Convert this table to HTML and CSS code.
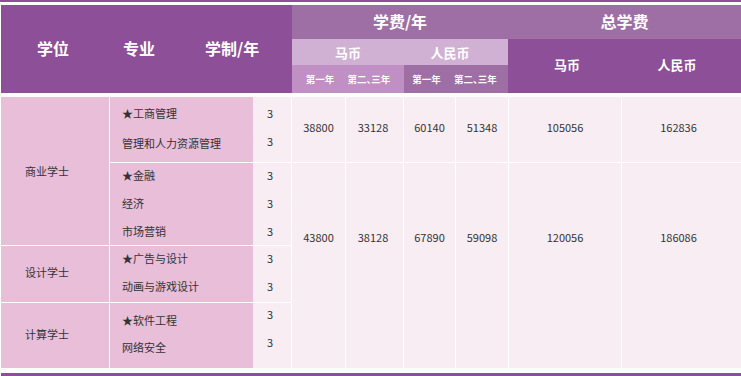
FILE: index.html
```html
<!DOCTYPE html>
<html lang="zh">
<head>
<meta charset="utf-8">
<title>学费表</title>
<link rel="stylesheet" href="styles.css">
</head>
<body>
<div class="page">
  <div class="topbar"></div>
  <div class="head">
    <div class="head-left">
      <span class="hl1">学位</span>
      <span class="hl2">专业</span>
      <span class="hl3">学制/年</span>
    </div>
    <div class="head-fee">
      <div class="h1">学费/年</div>
      <div class="h2"><span class="h2a">马币</span><span class="h2b">人民币</span></div>
      <div class="h3">
        <div class="sub sub-myr"><span>第一年</span><span>第二、三年</span></div>
        <div class="sub sub-rmb"><span>第一年</span><span>第二、三年</span></div>
      </div>
    </div>
    <div class="head-total">
      <div class="h1">总学费</div>
      <div class="h2t"><span class="t1">马币</span><span class="t2">人民币</span></div>
    </div>
  </div>

  <div class="grid">
    <div class="cell deg deg1 line-b">商业学士</div>
    <div class="cell deg deg2 line-b">设计学士</div>
    <div class="cell deg deg3">计算学士</div>

    <div class="cell maj maj1 line-b"><span>★工商管理</span><span>管理和人力资源管理</span></div>
    <div class="cell maj maj2 line-b"><span>★金融</span><span>经济</span><span>市场营销</span></div>
    <div class="cell maj maj3 line-b"><span>★广告与设计</span><span>动画与游戏设计</span></div>
    <div class="cell maj maj4"><span>★软件工程</span><span>网络安全</span></div>

    <div class="cell yrs yrs1 line-b"><span>3</span><span>3</span></div>
    <div class="cell yrs yrs2 line-b"><span>3</span><span>3</span><span>3</span></div>
    <div class="cell yrs yrs3 line-b"><span>3</span><span>3</span></div>
    <div class="cell yrs yrs4"><span>3</span><span>3</span></div>

    <div class="cell fee r1 c4 line-b">38800</div>
    <div class="cell fee r1 c5 line-b">33128</div>
    <div class="cell fee r1 c6 line-b">60140</div>
    <div class="cell fee r1 c7 line-b">51348</div>
    <div class="cell fee r1 c8 line-b">105056</div>
    <div class="cell fee r1 c9 line-b">162836</div>

    <div class="cell fee r2 c4">43800</div>
    <div class="cell fee r2 c5">38128</div>
    <div class="cell fee r2 c6">67890</div>
    <div class="cell fee r2 c7">59098</div>
    <div class="cell fee r2 c8">120056</div>
    <div class="cell fee r2 c9">186086</div>
  </div>
  <div class="bottombar"></div>
</div>
</body>
</html>
```

FILE: styles.css
```css
html, body {
  margin: 0;
  padding: 0;
  background: #ffffff;
}

.page {
  width: 741px;
  font-family: "Noto Sans CJK SC", "Noto Sans", sans-serif;
  color: #333333;
}

.topbar {
  height: 2px;
  background: #8c4f98;
}

.head {
  display: flex;
  margin-top: 3px;
  margin-left: 1px;
  height: 88px;
  color: #ffffff;
  font-weight: 700;
}

.head-left {
  width: 291px;
  background: #8c4f98;
  display: flex;
  align-items: center;
  font-size: 16px;
  padding-left: 36px;
  box-sizing: border-box;
  padding-bottom: 3px;
}

.hl1 { width: 86px; }
.hl2 { width: 82px; }

.head-fee {
  width: 216px;
  display: flex;
  flex-direction: column;
}

.h1 {
  height: 34px;
  background: #9d6fa5;
  display: flex;
  align-items: center;
  justify-content: center;
  font-size: 16px;
  padding-bottom: 2px;
  box-sizing: border-box;
}

.h2 {
  height: 26px;
  background: #d0b1d4;
  display: flex;
  align-items: center;
  font-size: 13px;
}

.h2a {
  width: 112px;
  text-align: center;
}

.h2b {
  width: 92px;
  text-align: center;
}

.h3 {
  height: 28px;
  display: flex;
}

.sub {
  display: flex;
  align-items: center;
  justify-content: center;
  gap: 13px;
  font-size: 9.5px;
  font-feature-settings: "halt";
}

.sub-myr {
  width: 112px;
  background: #c08fc3;
}

.sub-rmb {
  width: 104px;
  background: #9d6fa5;
  padding-right: 3px;
  box-sizing: border-box;
}

.head-total {
  flex: 1;
  display: flex;
  flex-direction: column;
}

.h2t {
  flex: 1;
  background: #8c4f98;
  display: flex;
  align-items: center;
  font-size: 13px;
  padding-bottom: 3px;
}

.t1 {
  width: 118px;
  text-align: center;
}

.t2 {
  width: 102px;
  text-align: center;
}

.grid {
  margin-top: 4px;
  margin-left: 1px;
  display: grid;
  grid-template-columns: 109px 143px 39px 54px 58px 52px 53px 113px 119px;
  grid-template-rows: 66px 83px 57px 65px;
  font-size: 11px;
}

.cell {
  box-sizing: border-box;
  display: flex;
}

.line-b {
  border-bottom: 1px solid #ffffff;
}

.deg {
  grid-column: 1;
  background: #e9bed9;
  border-right: 1px solid #ffffff;
  align-items: center;
  padding-left: 24px;
}

.deg1 { grid-row: 1 / span 2; }
.deg2 { grid-row: 3; padding-bottom: 4px; }
.deg3 { grid-row: 4; padding-bottom: 3px; }

.maj {
  grid-column: 2;
  background: #e9bed9;
  flex-direction: column;
  justify-content: center;
  padding-left: 12px;
  line-height: 28px;
  padding-bottom: 3px;
}

.maj1 { grid-row: 1; line-height: 30px; padding-bottom: 3px; }
.maj2 { grid-row: 2; }
.maj3 { grid-row: 3; padding-bottom: 4px; }
.maj4 { grid-row: 4; line-height: 27px; padding-bottom: 4px; }

.yrs {
  grid-column: 3;
  background: #f9edf4;
  border-right: 1px solid #ffffff;
  flex-direction: column;
  justify-content: center;
  padding-left: 14px;
  line-height: 28px;
  padding-bottom: 3px;
}

.yrs1 { grid-row: 1; padding-bottom: 5px; }
.yrs2 { grid-row: 2; }
.yrs3 { grid-row: 3; padding-bottom: 4px; }
.yrs4 { grid-row: 4; padding-bottom: 15px; }

.fee {
  background: #f9edf4;
  border-right: 1px solid #ffffff;
  justify-content: center;
  line-height: 16px;
}

.fee.c9 {
  border-right: none;
  padding-right: 6px;
}

.fee.c5 {
  padding-right: 3px;
}

.r1 {
  grid-row: 1;
  align-items: center;
  padding-bottom: 5px;
}

.r2 {
  grid-row: 2 / span 3;
  align-items: flex-start;
  padding-top: 66px;
}

.c4 { grid-column: 4; }
.c5 { grid-column: 5; }
.c6 { grid-column: 6; }
.c7 { grid-column: 7; }
.c8 { grid-column: 8; }
.c9 { grid-column: 9; }

.bottombar {
  margin-top: 5px;
  margin-left: 1px;
  height: 3px;
  background: #8c4f98;
}
```
